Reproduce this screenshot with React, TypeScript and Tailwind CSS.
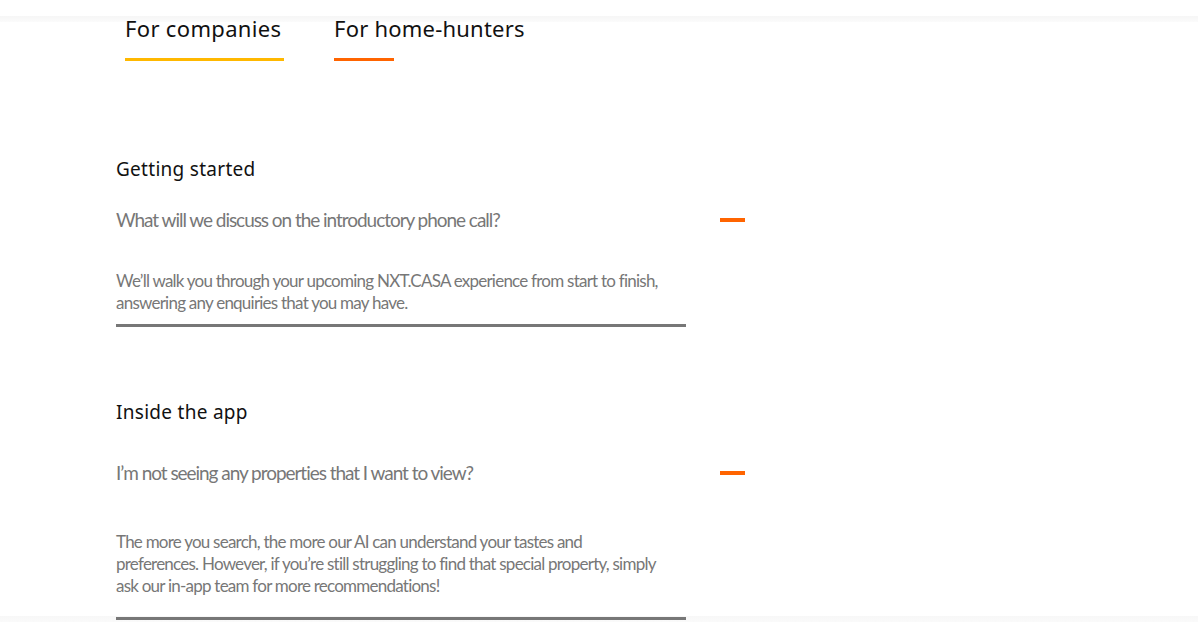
export default function App() {
  const sections = [
    {
      title: "Getting started",
      q: "What will we discuss on the introductory phone call?",
      a: "We’ll walk you through your upcoming NXT.CASA experience from start to finish, answering any enquiries that you may have.",
      qGap: "mt-[27px]",
      aGap: "mt-[38px]",
      barGap: "mt-[10px]",
    },
    {
      title: "Inside the app",
      q: "I’m not seeing any properties that I want to view?",
      a: "The more you search, the more our AI can understand your tastes and preferences. However, if you’re still struggling to find that special property, simply ask our in-app team for more recommendations!",
      qGap: "mt-[37px]",
      aGap: "mt-[46px]",
      barGap: "mt-[20px]",
    },
  ];

  return (
    <div className="relative h-[638px] w-[1200px] overflow-hidden bg-white">
      <div className="absolute left-0 top-[16px] h-[6px] w-[1198px] bg-gradient-to-b from-[#f6f6f6] to-[#fbfbfb]" />
      <div className="absolute left-0 top-[616px] h-[6px] w-[1198px] bg-gradient-to-b from-[#f7f7f7] to-[#fafafa]" />

      <div className="relative pl-[125px] pt-[14px] flex gap-[50px] font-['Noto_Sans',sans-serif]">
        <div className="flex flex-col">
          <span className="text-[22px] leading-[28px] tracking-[0.015em] text-[#111]">For companies</span>
          <div className="mt-[16px] h-[3px] w-[159px] bg-[#ffb800]" />
        </div>
        <div className="flex flex-col">
          <span className="text-[22px] leading-[28px] tracking-[0.01em] text-[#111]">For home-hunters</span>
          <div className="mt-[16px] h-[3px] w-[60px] bg-[#ff6400]" />
        </div>
      </div>

      <div className="relative pl-[116px] pt-[96px] flex flex-col">
        {sections.map((s, i) => (
          <div key={i} className={i === 0 ? "" : "mt-[73px]"}>
            <h3 className="text-[19px] leading-[24px] tracking-[0.015em] text-[#111] font-['Noto_Sans',sans-serif]">{s.title}</h3>
            <div className={`${s.qGap} flex w-[629px] items-center justify-between`}>
              <span className="text-[19px] leading-[24px] text-[#777] tracking-[-0.055em] font-['Lato',sans-serif]">{s.q}</span>
              <div className="h-[4px] w-[25px] bg-[#ff6400]" />
            </div>
            <p className={`${s.aGap} w-[547px] text-[17px] leading-[22px] text-[#777] tracking-[-0.045em] font-['Lato',sans-serif]`}>{s.a}</p>
            <div className={`${s.barGap} h-[3px] w-[570px] bg-[#777]`} />
          </div>
        ))}
      </div>
    </div>
  );
}
